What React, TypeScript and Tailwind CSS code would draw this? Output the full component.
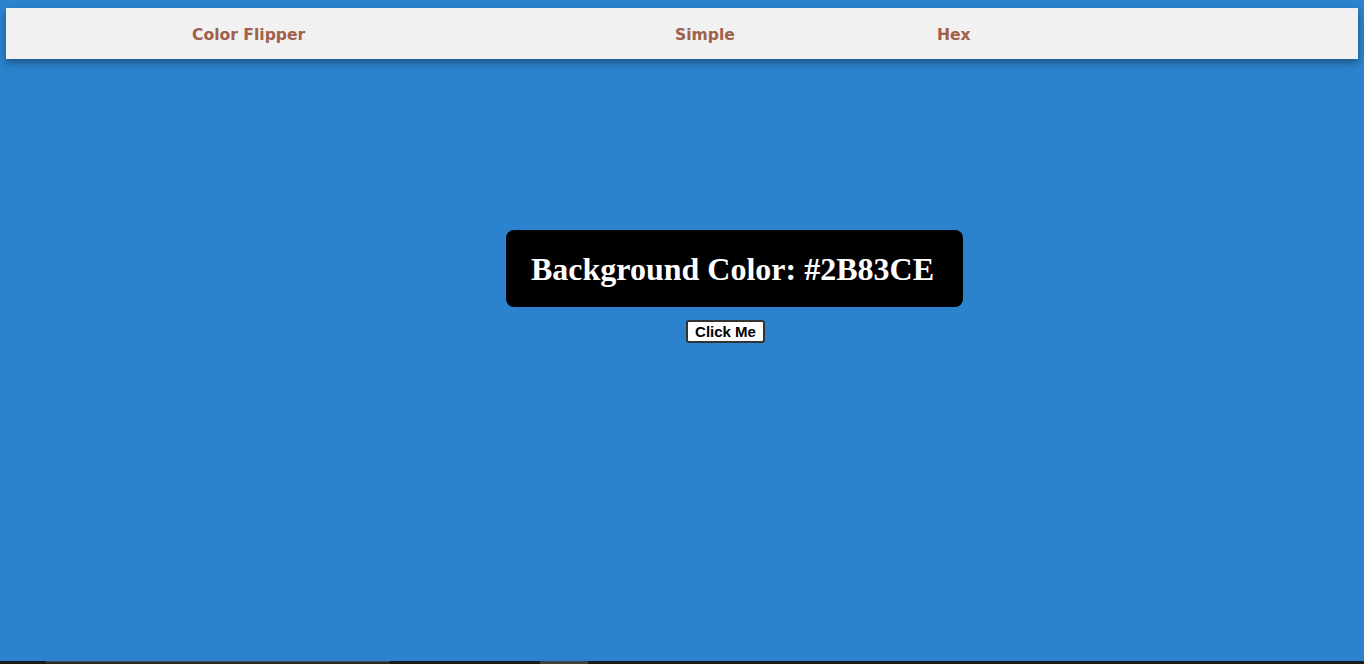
import React from "react";

export default function App() {
  return (
    <div className="w-[1364px] h-[664px] bg-[#2b83ce] flex flex-col overflow-hidden">
      <div className="pt-[8px] px-[6px]">
        <nav
          className="h-[51px] bg-[#f1f1f1] flex items-center shadow-[0_4px_8px_rgba(0,0,0,0.35)] text-[#a0604a] font-bold text-[15.6px]"
          style={{ fontFamily: "Tahoma, 'DejaVu Sans', Verdana, sans-serif" }}
        >
          <div className="w-[486px] pl-[186px] pt-[5px]">Color Flipper</div>
          <div className="ml-[183px] pt-[5px]">Simple</div>
          <div className="ml-[202px] pt-[5px]">Hex</div>
        </nav>
      </div>
      <main className="flex-1 flex flex-col">
        <div className="mt-[171px] ml-[506px] w-[457px] h-[77px] bg-black rounded-[8px] flex items-center justify-center">
          <h2
            className="text-white font-bold text-[32px] leading-none mr-[4px]"
            style={{ fontFamily: "'Liberation Serif', 'Times New Roman', serif" }}
          >
            Background Color: #2B83CE
          </h2>
        </div>
        <div className="mt-[13px] ml-[686px]">
          <button
            className="w-[79px] h-[23px] bg-white border-2 border-[#333] rounded-[3px] text-black font-bold text-[15px] leading-none flex items-center justify-center"
            style={{ fontFamily: "'Liberation Sans', Arial, sans-serif" }}
          >
            Click Me
          </button>
        </div>
      </main>
      <div className="h-[3px] bg-[#1b1b1b] flex shrink-0">
        <div className="ml-[46px] w-[344px] bg-[#2a2a2a] border-t border-[#4a4a4a]" />
        <div className="ml-[150px] w-[48px] bg-[#424242]" />
      </div>
    </div>
  );
}
